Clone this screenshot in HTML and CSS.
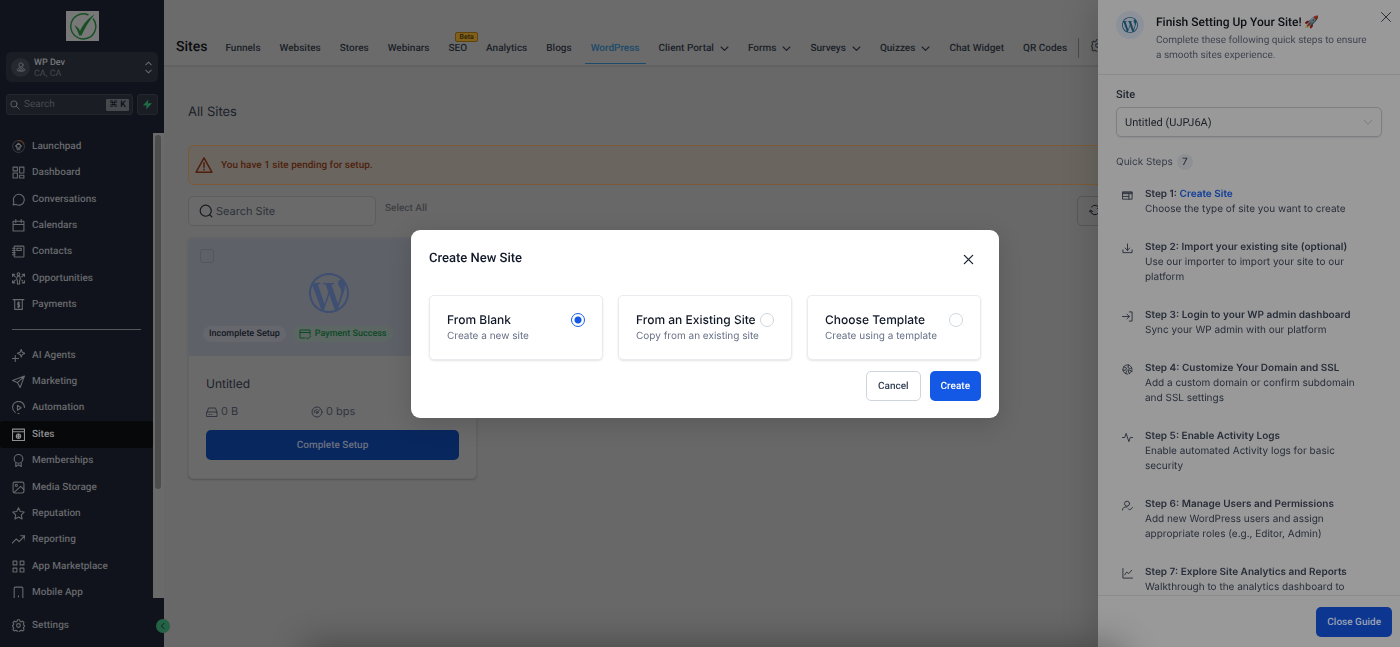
FILE: index.html
```html
<!DOCTYPE html>
<html lang="en">
<head>
    <meta charset="UTF-8">
    <meta name="viewport" content="width=device-width, initial-scale=1.0">
    <title>Sites - WordPress</title>
    <link rel="stylesheet" href="styles.css">
</head>
<body>
    <svg class="sprite" aria-hidden="true">
        <symbol id="wp" viewBox="0 0 24 24"><path d="M21.469 6.825c.84 1.537 1.318 3.3 1.318 5.175 0 3.979-2.156 7.456-5.363 9.325l3.295-9.527c.615-1.54.82-2.771.82-3.864 0-.405-.026-.78-.07-1.11m-7.981.105c.647-.03 1.232-.105 1.232-.105.582-.075.514-.93-.067-.899 0 0-1.755.135-2.88.135-1.064 0-2.85-.15-2.85-.15-.585-.03-.661.855-.075.885 0 0 .54.061 1.125.09l1.68 4.605-2.37 7.08L5.354 6.9c.649-.03 1.234-.1 1.234-.1.585-.075.516-.93-.065-.896 0 0-1.746.138-2.874.138-.2 0-.438-.008-.69-.015C4.911 3.15 8.235 1.215 12 1.215c2.809 0 5.365 1.072 7.286 2.833-.046-.003-.091-.009-.141-.009-1.06 0-1.812.923-1.812 1.914 0 .89.513 1.643 1.06 2.531.411.72.89 1.643.89 2.977 0 .915-.354 1.994-.821 3.479l-1.075 3.585-3.9-11.61.001.014zM12 22.784c-1.059 0-2.081-.153-3.048-.437l3.237-9.406 3.315 9.087c.024.053.05.101.078.149-1.12.393-2.325.609-3.582.609M1.211 12c0-1.564.336-3.05.935-4.39L7.29 21.709C3.694 19.96 1.212 16.271 1.211 12M12 0C5.385 0 0 5.385 0 12s5.385 12 12 12 12-5.385 12-12S18.615 0 12 0"/></symbol>
        <symbol id="down" viewBox="0 0 24 24"><path d="M3 8l9 9 9-9"/></symbol>
        <symbol id="close" viewBox="0 0 24 24"><path d="M3 3l18 18M21 3L3 21"/></symbol>
        <symbol id="gear" viewBox="0 0 24 24"><circle cx="12" cy="12" r="3.5"/><path d="M10 1.5h4l.7 3 2.2.9 2.6-1.6 2.8 2.8-1.6 2.6.9 2.1 2.900.7v2l-2.900.7-.9 2.100 1.600 2.600-2.800 2.800-2.600-1.600-2.200.9-.7 3h-4l-.7-3-2.200-.9-2.600 1.600-2.800-2.800 1.600-2.600-.9-2.100-2.500-.7v-2l2.500-.7.9-2.100-1.600-2.600 2.800-2.800 2.600 1.600 2.200-.9z"/></symbol>
        <symbol id="search" viewBox="0 0 24 24"><circle cx="9.500" cy="9.500" r="7.500"/><path d="M15 15l7 7"/></symbol>
        <symbol id="search-round" viewBox="0 0 24 24"><circle cx="11.500" cy="11.500" r="9.500"/><path d="M18.500 18.500L22 22"/></symbol>
    </svg>

    <div class="app">
        <aside class="sidebar">
            <div class="brand">
                <svg viewBox="0 0 33 30" width="33" height="30">
                    <rect width="33" height="30" fill="#787878"/>
                    <path d="M27 7.500A12.500 12.500 0 1 1 22.500 4" fill="none" stroke="#154f22" stroke-width="1.400"/>
                    <path d="M8.500 14.500c2 .5 4.500 2.700 5.500 5.500C17 13.500 22 7 28.500 3.500 23 10 18.500 17.500 15.500 24.500h-2.300C12 20 10 17 8.500 14.500z" fill="#154f22"/>
                </svg>
            </div>
            <button class="account" type="button">
                <span class="avatar"><svg class="ico" viewBox="0 0 24 24"><circle cx="12" cy="7" r="5"/><path d="M9 12l-6 6c-1 4 3 4 9 4s10 0 9-4l-6-6M7 19l5-5 5 5z"/></svg></span>
                <span class="account-name"><strong>WP Dev</strong><span>CA, CA</span></span>
                <svg class="ico" viewBox="0 0 24 24"><path d="M7 7l5-5 5 5M7 17l5 5 5-5"/></svg>
            </button>
            <div class="quick">
                <label class="quick-search">
                    <svg class="ico"><use href="#search"/></svg>
                    <input type="text" placeholder="Search" aria-label="Search">
                    <kbd>⌘ K</kbd>
                </label>
                <button class="bolt" type="button" aria-label="Quick actions"><svg viewBox="0 0 24 24" width="11" height="11"><path d="M14 1L2 14h8l-1 9 13-14h-9z" fill="#1f6b46"/></svg></button>
            </div>
            <div class="menu-wrap">
                <nav class="menu">
                    <ul class="menu-top">
                        <li><a href="#"><svg class="ico" viewBox="0 0 24 24"><circle cx="12" cy="12" r="11" stroke="#33363c"/><path d="M12 1a11 11 0 0 1 10 6.500" stroke="#6b3a20"/><path d="M12 6l-5.500 5.500H9V15h6v-3.500h2.500zM9.500 18h5"/></svg>Launchpad</a></li>
                        <li><a href="#"><svg class="ico" viewBox="0 0 24 24"><path d="M2 2h8v7H2zM14 2h8v11h-8zM2 13h8v9H2zM14 17h8v5h-8z"/></svg>Dashboard</a></li>
                        <li><a href="#"><svg class="ico" viewBox="0 0 24 24"><path d="M2 22l1.500-5.500A10 10 0 1 1 7.500 21z"/></svg>Conversations</a></li>
                        <li><a href="#"><svg class="ico" viewBox="0 0 24 24"><path d="M2 4h20v18H2zM2 10h20M7 1v6M17 1v6"/></svg>Calendars</a></li>
                        <li><a href="#"><svg class="ico" viewBox="0 0 24 24"><rect x="4" y="2" width="18" height="20" rx="1"/><path d="M9 6h8v4H9zM1 6h5M1 10h5M1 14h5M1 18h5"/></svg>Contacts</a></li>
                        <li><a href="#"><svg class="ico" viewBox="0 0 24 24"><circle cx="12" cy="4" r="2.500"/><path d="M12 7c-4 2-4 6-2 9v6h4v-6c2-3 2-7-2-9zM1 4l5 5M1 8V4h4M23 4l-5 5M23 8V4h-4M1 20l5-5M1 16v4h4M23 20l-5-5M23 16v4h-4"/></svg>Opportunities</a></li>
                        <li><a href="#"><svg class="ico" viewBox="0 0 24 24"><path d="M2 3h20M5 3v18h14V3M14.500 9h-4v3.500h3.500V16h-4M12 7v11"/></svg>Payments</a></li>
                    </ul>
                    <ul class="menu-bottom">
                        <li><a href="#"><svg class="ico" viewBox="0 0 24 24"><path d="M17 1l2 5 5 2-5 2-2 5-2-5-5-2 5-2zM6 12v11M0 17.500h12"/></svg>AI Agents</a></li>
                        <li><a href="#"><svg class="ico" viewBox="0 0 24 24"><path d="M23 2L1 10l9 4 5 9zM23 2L10 14"/></svg>Marketing</a></li>
                        <li><a href="#"><svg class="ico" viewBox="0 0 24 24"><path d="M6 21A11 11 0 1 1 23 12M10 8v9l7-4.500zM11 23h2"/></svg>Automation</a></li>
                        <li class="active"><a href="#"><svg class="ico" viewBox="0 0 24 24"><path d="M1 2h22v21H1zM1 7h22"/><circle cx="12" cy="15" r="4"/><path d="M12 11v8M8 15h8"/></svg>Sites</a></li>
                        <li><a href="#"><svg class="ico" viewBox="0 0 24 24"><circle cx="12" cy="9" r="8"/><path d="M7 16v7l5-3 5 3v-7"/></svg>Memberships</a></li>
                        <li><a href="#"><svg class="ico" viewBox="0 0 24 24"><rect x="2" y="2" width="20" height="20" rx="3"/><circle cx="8" cy="8" r="2"/><path d="M4 21L16 10l6 6"/></svg>Media Storage</a></li>
                        <li><a href="#"><svg class="ico" viewBox="0 0 24 24"><path d="M12 1.500l3.200 6.800 7.300 1-5.300 5.200 1.300 7.500L12 18.500 5.500 22l1.300-7.500L1.500 9.300l7.300-1z"/></svg>Reputation</a></li>
                        <li><a href="#"><svg class="ico" viewBox="0 0 24 24"><path d="M0 19l8-8 5 5L23 6M16 5h8v8"/></svg>Reporting</a></li>
                        <li><a href="#"><svg class="ico" viewBox="0 0 24 24"><path d="M2 2h7v7H2zM15 2h7v7h-7zM2 15h7v7H2zM15 15h7v7h-7z"/></svg>App Marketplace</a></li>
                        <li><a href="#"><svg class="ico" viewBox="0 0 24 24"><rect x="4" y="2" width="16" height="24" rx="2"/><path d="M12 18v2"/></svg>Mobile App</a></li>
                    </ul>
                </nav>
                <div class="track"><div class="thumb"></div></div>
            </div>
            <a class="settings" href="#"><svg class="ico"><use href="#gear"/></svg>Settings</a>
            <button class="collapse" type="button" aria-label="Collapse sidebar"><svg class="ico" viewBox="0 0 24 24"><path d="M15 4l-8 8 8 8"/></svg></button>
        </aside>

        <main class="main">
            <header class="topbar">
                <h1>Sites</h1>
                <nav class="tabs">
                    <a href="#">Funnels</a>
                    <a href="#">Websites</a>
                    <a href="#">Stores</a>
                    <a href="#">Webinars</a>
                    <a href="#">SEO<span class="beta">Beta</span></a>
                    <a href="#">Analytics</a>
                    <a href="#">Blogs</a>
                    <a href="#" class="current">WordPress</a>
                    <a href="#">Client Portal<svg class="ico"><use href="#down"/></svg></a>
                    <a href="#">Forms<svg class="ico"><use href="#down"/></svg></a>
                    <a href="#">Surveys<svg class="ico"><use href="#down"/></svg></a>
                    <a href="#">Quizzes<svg class="ico"><use href="#down"/></svg></a>
                    <a href="#">Chat Widget</a>
                    <a href="#">QR Codes</a>
                </nav>
                <button class="top-settings" type="button" aria-label="Site settings"><svg class="ico"><use href="#gear"/></svg></button>
            </header>

            <section class="content">
                <h2>All Sites</h2>
                <div class="alert">
                    <svg class="ico" viewBox="0 0 24 24"><path d="M12 2.500L1.500 21.500h21zM12 9v6M12 17.500v1"/></svg>
                    You have 1 site pending for setup.
                </div>
                <div class="tools">
                    <label class="site-search">
                        <svg class="ico"><use href="#search-round"/></svg>
                        <input type="text" placeholder="Search Site" aria-label="Search Site">
                    </label>
                    <button class="select-all" type="button">Select All</button>
                    <button class="refresh" type="button" aria-label="Refresh"><svg class="ico" viewBox="0 0 24 24"><path d="M3 14a9 9 0 0 0 16 4M21 10A9 9 0 0 0 5 6M1 16l2-4 4 3M23 8l-2 4-4-3"/></svg></button>
                </div>

                <article class="site-card">
                    <div class="site-preview">
                        <input type="checkbox" aria-label="Select Untitled">
                        <svg class="site-logo"><use href="#wp"/></svg>
                        <div class="pills">
                            <span class="pill">Incomplete Setup</span>
                            <span class="pill paid"><svg class="ico" viewBox="0 0 24 24"><path d="M11 20H2V4h20v10M2 9h20M14 19l3 3 6-5"/></svg>Payment Success</span>
                        </div>
                    </div>
                    <div class="site-info">
                        <h3>Untitled</h3>
                        <div class="stats">
                            <span><svg class="ico" viewBox="0 0 24 24"><path d="M2 13l3-9h14l3 9M2 12h20v9H2zM6 17h1M10 17h1"/></svg>0 B</span>
                            <span><svg class="ico" viewBox="0 0 24 24"><circle cx="12" cy="12" r="10"/><circle cx="12" cy="13" r="2"/><path d="M13.500 11.500L18 7M6 13a6 6 0 0 1 6-6"/></svg>0 bps</span>
                        </div>
                        <button class="btn complete" type="button">Complete Setup</button>
                    </div>
                </article>
            </section>
        </main>
    </div>

    <aside class="drawer">
        <header class="drawer-head">
            <span class="wp-badge"><svg><use href="#wp"/></svg></span>
            <div>
                <h2>Finish Setting Up Your Site! <span class="rocket">🚀</span></h2>
                <p>Complete these following quick steps to ensure a smooth sites experience.</p>
            </div>
            <button class="drawer-close" type="button" aria-label="Close guide"><svg class="ico"><use href="#close"/></svg></button>
        </header>
        <div class="drawer-body">
            <label class="field-label" for="site">Site</label>
            <div class="select-box">
                <select id="site"><option>Untitled (UJPJ6A)</option></select>
                <svg class="ico"><use href="#down"/></svg>
            </div>
            <p class="steps-title">Quick Steps <span class="count">7</span></p>
            <ol class="steps">
                <li>
                    <svg class="ico" viewBox="0 0 24 24"><path d="M2 4h20v16H2zM2 8h20M2 6h20M15 8v12M2 14h13"/></svg>
                    <div><h4>Step 1: <a href="#">Create Site</a></h4><p>Choose the type of site you want to create</p></div>
                </li>
                <li>
                    <svg class="ico" viewBox="0 0 24 24"><path d="M2 15v6h20v-6M12 2v14M7 11l5 5 5-5"/></svg>
                    <div><h4>Step 2: Import your existing site (optional)</h4><p>Use our importer to import your site to our platform</p></div>
                </li>
                <li>
                    <svg class="ico" viewBox="0 0 24 24"><path d="M1 12h15M11 7l5 5-5 5M16 2h6v20h-6"/></svg>
                    <div><h4>Step 3: Login to your WP admin dashboard</h4><p>Sync your WP admin with our platform</p></div>
                </li>
                <li>
                    <svg class="ico" viewBox="0 0 24 24"><path d="M12 22A10 10 0 1 1 22 12M4 6l6 3-3 5-5-1M14 2l-1 6 5 2 3-2M8 21l2-6M13 13l3 9 2-4 4-2z"/></svg>
                    <div><h4>Step 4: Customize Your Domain and SSL</h4><p>Add a custom domain or confirm subdomain and SSL settings</p></div>
                </li>
                <li>
                    <svg class="ico" viewBox="0 0 24 24"><path d="M1 12h5l3-9 6 18 3-9h5"/></svg>
                    <div><h4>Step 5: Enable Activity Logs</h4><p>Enable automated Activity logs for basic security</p></div>
                </li>
                <li>
                    <svg class="ico" viewBox="0 0 24 24"><circle cx="11" cy="8" r="5.500"/><path d="M1 22c0-5 3-7 10-7M14 19l3 3 6-6"/></svg>
                    <div><h4>Step 6: Manage Users and Permissions</h4><p>Add new WordPress users and assign appropriate roles (e.g., Editor, Admin)</p></div>
                </li>
                <li>
                    <svg class="ico" viewBox="0 0 24 24"><path d="M2 1v21h21M6 15l4-6 5 3 6-7"/></svg>
                    <div><h4>Step 7: Explore Site Analytics and Reports</h4><p>Walkthrough to the analytics dashboard to</p></div>
                </li>
            </ol>
        </div>
        <footer class="drawer-foot"><button class="btn guide" type="button">Close Guide</button></footer>
    </aside>

    <div class="overlay">
        <form class="modal" role="dialog" aria-labelledby="modal-title">
            <header class="modal-head">
                <h2 id="modal-title">Create New Site</h2>
                <button type="button" aria-label="Close"><svg class="ico"><use href="#close"/></svg></button>
            </header>
            <div class="options">
                <label class="option">
                    <span class="option-name">From Blank</span>
                    <input type="radio" name="source" checked>
                    <span class="option-desc">Create a new site</span>
                </label>
                <label class="option">
                    <span class="option-name">From an Existing Site</span>
                    <input type="radio" name="source">
                    <span class="option-desc">Copy from an existing site</span>
                </label>
                <label class="option">
                    <span class="option-name">Choose Template</span>
                    <input type="radio" name="source">
                    <span class="option-desc">Create using a template</span>
                </label>
            </div>
            <footer class="modal-foot">
                <button class="btn cancel" type="button">Cancel</button>
                <button class="btn create" type="button">Create</button>
            </footer>
        </form>
    </div>
</body>
</html>
```

FILE: styles.css
```css
* {
    box-sizing: border-box;
}
body {
    margin: 0;
    font-family: Inter, sans-serif;
    font-size: 10px;
    line-height: 15px;
    background: #686868;
    color: #14181f;
    overflow: hidden;
    text-rendering: geometricPrecision;
}
h1, h2, h3, h4, p, ul, ol {
    margin: 0;
    padding: 0;
    font-weight: 500;
}
ul, ol {
    list-style: none;
}
a {
    color: inherit;
    text-decoration: none;
}
button, input, select {
    font: inherit;
    color: inherit;
    text-rendering: inherit;
    margin: 0;
    padding: 0;
    border: 0;
    background: none;
    outline: none;
}
.sprite {
    position: absolute;
    width: 0;
    height: 0;
}
.ico {
    width: 13px;
    height: 13px;
    flex: none;
    fill: none;
    stroke: currentColor;
    stroke-width: 2;
    stroke-linecap: round;
    stroke-linejoin: round;
}
.app {
    display: flex;
    height: 100vh;
}

/* Sidebar */
.sidebar {
    position: relative;
    flex: none;
    width: 164px;
    display: flex;
    flex-direction: column;
    background: #10131b;
    color: #67696d;
    font-family: Roboto, sans-serif;
    font-weight: 500;
}
.brand {
    display: flex;
    justify-content: center;
    padding: 11px 0;
}
.account {
    display: flex;
    align-items: center;
    gap: 4px;
    height: 30px;
    margin: 0 6px 12px;
    padding: 0 3px 0 5px;
    border-radius: 5px;
    background: #1a1d24;
    text-align: left;
}
.avatar {
    display: flex;
    align-items: center;
    justify-content: center;
    width: 19px;
    height: 19px;
    border-radius: 50%;
    background: #26292f;
}
.avatar .ico {
    width: 10px;
    height: 10px;
}
.account-name {
    flex: 1;
    padding-top: 3px;
    font-size: 9px;
    line-height: 11px;
    font-weight: 400;
    color: #46484d;
}
.account-name strong {
    display: block;
    font-weight: 500;
    color: #77797c;
}
.quick {
    display: flex;
    gap: 4px;
    margin: 0 6px;
}
.quick-search, .bolt {
    display: flex;
    align-items: center;
    height: 21px;
    border: 1px solid #23262c;
    border-radius: 3px;
    background: #1a1d23;
}
.quick-search {
    flex: 1;
    min-width: 0;
    gap: 4px;
    padding: 0 3px;
}
.quick-search .ico {
    width: 10px;
    height: 10px;
}
.quick-search input {
    flex: 1;
    min-width: 0;
    font-weight: 400;
}
.quick-search input::placeholder {
    color: #494b50;
    opacity: 1;
}
kbd {
    flex: none;
    padding: 0 3px;
    border-radius: 1px;
    background: #46494e;
    color: #0b0d12;
    font: 500 9px/12px Roboto, "DejaVu Sans", sans-serif;
}
.bolt {
    flex: none;
    justify-content: center;
    width: 21px;
}
.menu-wrap {
    flex: 1;
    min-height: 0;
    display: flex;
    margin-top: 18px;
}
.menu {
    flex: 1;
    overflow: hidden;
    line-height: 11px;
}
.menu ul {
    display: grid;
    grid-auto-rows: 1fr;
}
.menu-top {
    height: 185px;
}
.menu-bottom {
    height: 264px;
    position: relative;
    margin-top: 24px;
}
.menu-bottom::before {
    content: "";
    position: absolute;
    top: -13px;
    left: 12px;
    right: 12px;
    height: 1px;
    background: #55575a;
}
.menu a, .settings {
    display: flex;
    align-items: center;
    gap: 7px;
    height: 100%;
    padding-left: 12px;
}
.menu .active {
    background: #07080a;
    color: #8f9092;
    border-radius: 3px;
}
.track {
    width: 11px;
    padding: 2px 3px 0 2px;
    background: #6a6a6a;
}
.thumb {
    width: 6px;
    height: 354px;
    border-radius: 3px;
    background: #4d4d4d;
}
.settings {
    flex: none;
    height: 49px;
    padding-top: 5px;
}
.collapse {
    position: absolute;
    right: -6px;
    bottom: 14px;
    width: 14px;
    height: 14px;
    display: flex;
    align-items: center;
    justify-content: center;
    border-radius: 50%;
    background: #246246;
    color: #0d2018;
}
.collapse .ico {
    width: 8px;
    height: 8px;
    stroke-width: 3;
}

/* Main area */
.main {
    flex: 1;
    min-width: 0;
    overflow: hidden;
}
.topbar {
    display: flex;
    align-items: flex-end;
    height: 67px;
    padding: 0 12px;
    background: #6b6b6b;
    border-bottom: 2px solid #616161;
    font-family: Roboto, sans-serif;
}
.topbar h1 {
    font-size: 14px;
    line-height: 18px;
    margin-bottom: 9px;
    color: #0a0c10;
}
.tabs {
    display: flex;
    gap: 7px;
    margin: 0 5px 1px 12px;
    color: #1a1f28;
    font-weight: 500;
    white-space: nowrap;
}
.tabs a {
    position: relative;
    display: flex;
    align-items: center;
    gap: 6px;
    height: 32px;
    padding: 2px 6px 0;
    border-bottom: 1px solid transparent;
}
.tabs .current {
    color: #1b4a6a;
    border-color: #1b4a6a;
}
.tabs .ico {
    width: 9px;
    height: 9px;
    stroke-width: 3;
}
.beta {
    position: absolute;
    top: 0;
    left: 13px;
    padding: 0 3px;
    border: 1px solid #5e430b;
    border-radius: 2px;
    background: #80601a;
    font-size: 7px;
    line-height: 8px;
    color: #2b1d08;
}
.top-settings {
    height: 20px;
    margin-bottom: 7px;
    padding-left: 12px;
    border-left: 1px solid #4b4b4b;
    color: #2a2e35;
}
.content {
    padding: 36px 24px;
}
.content h2 {
    font-size: 13px;
    line-height: 18px;
    font-weight: 400;
    color: #1a1f2a;
}
.alert {
    display: flex;
    align-items: center;
    gap: 8px;
    height: 40px;
    margin-top: 24px;
    padding: 0 6px;
    border: 1px solid #7d5a37;
    border-radius: 5px;
    background: #6a665f;
    color: #4f1e0d;
    font-family: Roboto, sans-serif;
    font-weight: 500;
}
.alert .ico {
    width: 18px;
    height: 18px;
}
.tools {
    display: flex;
    align-items: center;
    margin: 11px 0;
}
.site-search {
    display: flex;
    align-items: center;
    gap: 3px;
    width: 188px;
    height: 30px;
    padding: 0 10px;
    border: 1px solid #5c5d5f;
    border-radius: 5px;
    background: #6a6a6a;
    font-size: 11px;
}
.site-search .ico {
    width: 14px;
    height: 14px;
}
.site-search input {
    flex: 1;
    min-width: 0;
}
.site-search input::placeholder {
    color: #2c313a;
    opacity: 1;
}
.select-all {
    margin: 0 auto 5px 9px;
    font-family: Roboto, sans-serif;
    font-weight: 500;
    color: #3d3f43;
}
.refresh {
    width: 44px;
    height: 30px;
    margin-right: 255px;
    padding: 2px 0 0 11px;
    text-align: left;
    border: 1px solid #585858;
    border-radius: 5px;
}
.refresh .ico {
    width: 12px;
    height: 12px;
}
.site-card {
    width: 289px;
    border: 1px solid #636466;
    border-radius: 5px;
    background: #6a6a6a;
    box-shadow: 0 1px 2px rgba(0, 0, 0, 0.2);
    overflow: hidden;
}
.site-preview {
    display: flex;
    flex-direction: column;
    height: 118px;
    padding: 11px;
    background: #5f6169;
}
.site-preview input, .option input {
    appearance: none;
}
.site-preview input {
    width: 14px;
    height: 14px;
    border: 1px solid #54565c;
    border-radius: 3px;
}
.site-logo {
    width: 40px;
    height: 40px;
    margin: 10px 0 13px 109px;
    fill: #3e4f71;
}
.pills {
    display: flex;
    gap: 7px;
    padding-left: 3px;
    font-family: Roboto, sans-serif;
    font-weight: 500;
    font-size: 9px;
    line-height: 16px;
    white-space: nowrap;
}
.pill {
    display: flex;
    align-items: center;
    gap: 4px;
    padding: 0 6px;
    border-radius: 8px;
    background: #65676d;
    color: #14181f;
}
.paid {
    background: #5c6663;
    color: #0c4a26;
}
.paid .ico {
    width: 12px;
    height: 12px;
}
.site-info {
    padding: 19px 17px 18px;
}
.site-info h3 {
    font-size: 12px;
    line-height: 18px;
    font-weight: 400;
    color: #1c212b;
}
.stats {
    display: flex;
    margin: 11px 0;
    color: #30353f;
    font-size: 11px;
}
.stats span {
    display: flex;
    align-items: center;
    gap: 3px;
    width: 105px;
}
.stats .ico {
    width: 12px;
    height: 12px;
}
.btn {
    height: 30px;
    padding: 0 11px;
    border-radius: 5px;
    font-family: Roboto, sans-serif;
    font-weight: 500;
}
.complete {
    width: 100%;
    background: #09275f;
    color: #6b7180;
}

/* Setup guide */
.drawer {
    position: fixed;
    top: 0;
    right: 0;
    bottom: 0;
    width: 302px;
    display: flex;
    flex-direction: column;
    background: #999;
    box-shadow: -6px 0 30px rgba(0, 0, 0, 0.15);
}
.drawer-head {
    display: flex;
    align-items: flex-start;
    gap: 8px;
    height: 75px;
    padding: 11px 8px 0 18px;
    border-bottom: 1px solid #8c8c8d;
    font-family: Roboto, sans-serif;
}
.drawer-head > div {
    flex: 1;
}
.wp-badge {
    display: flex;
    align-items: center;
    justify-content: center;
    width: 28px;
    height: 28px;
    margin-right: 4px;
    border-radius: 50%;
    background: #8d9199;
}
.wp-badge svg {
    width: 16px;
    height: 16px;
    fill: #1b4861;
}
.drawer-head h2 {
    font-size: 12px;
    line-height: 22px;
    color: #0c0f14;
}
.rocket {
    filter: brightness(0.6);
}
.drawer-head p {
    padding-right: 2px;
    font-weight: 400;
    color: #3e4450;
}
.drawer-close {
    height: 13px;
    color: #2a2e35;
}
.drawer-close .ico {
    width: 12px;
    height: 12px;
}
.drawer-body {
    flex: 1;
    min-height: 0;
    overflow: hidden;
    padding: 12px 18px 0;
}
.field-label {
    display: block;
    color: #20262f;
    font-family: Roboto, sans-serif;
    font-size: 11px;
    font-weight: 500;
}
.select-box {
    display: flex;
    align-items: center;
    height: 30px;
    margin: 5px 0 17px;
    padding-right: 8px;
    border: 1px solid #7d7f83;
    border-radius: 5px;
    box-shadow: 0 1px 1px rgba(0, 0, 0, 0.08);
}
.select-box select {
    appearance: none;
    flex: 1;
    height: 100%;
    padding-left: 8px;
    font-family: Roboto, sans-serif;
    font-size: 11px;
    color: #1c2028;
}
.select-box .ico {
    width: 10px;
    height: 10px;
    color: #74777c;
}
.steps-title {
    display: flex;
    align-items: center;
    gap: 4px;
    font-weight: 400;
    color: #343b47;
}
.count {
    width: 16px;
    border-radius: 8px;
    background: #8e9094;
    line-height: 16px;
    text-align: center;
    color: #20262f;
}
.steps {
    display: grid;
    gap: 23px;
    margin-top: 17px;
    color: #272e3a;
}
.steps li {
    display: flex;
    gap: 12px;
    padding: 0 18px 0 6px;
}
.steps .ico {
    width: 11px;
    height: 11px;
    margin-top: 3px;
}
.steps h4 {
    font-weight: 600;
}
.steps a {
    color: #0e3c9a;
}
.steps p {
    font-weight: 400;
}
.drawer-foot {
    display: flex;
    justify-content: flex-end;
    padding: 11px 8px 10px;
    border-top: 1px solid #8c8c8d;
}
.guide {
    background: #0c3690;
    color: #9aa3b5;
}

/* Create site dialog */
.overlay {
    position: fixed;
    inset: 0;
    display: flex;
    align-items: center;
    justify-content: center;
    padding: 1px 0 0 10px;
}
.overlay::after {
    content: "";
    position: absolute;
    top: 100%;
    left: 22%;
    right: 20%;
    height: 40px;
    box-shadow: 0 0 34px 4px rgba(0, 0, 0, 0.3);
}
.modal {
    width: 588px;
    padding: 18px 18px 17px;
    border-radius: 9px;
    background: #fff;
    box-shadow: 0 6px 24px rgba(0, 0, 0, 0.15);
}
.modal-head {
    display: flex;
    justify-content: space-between;
    height: 47px;
    padding-right: 7px;
}
.modal-head h2 {
    font: 500 13px/22px Roboto, sans-serif;
    color: #101828;
}
.modal-head button {
    height: 28px;
}
.modal-head .ico {
    width: 11px;
    height: 11px;
    stroke-width: 3;
    color: #1d2939;
}
.options {
    display: grid;
    grid-template-columns: repeat(3, minmax(0, 1fr));
    gap: 15px;
}
.option {
    display: grid;
    grid-template-columns: 1fr auto;
    padding: 15px 17px;
    border: 1px solid #e9ebee;
    border-radius: 5px;
    box-shadow: 0 1px 2px rgba(16, 24, 40, 0.12);
    white-space: nowrap;
}
.option-name {
    font-size: 12px;
    line-height: 18px;
    font-weight: 500;
    color: #101828;
}
.option-desc {
    grid-column: 1 / -1;
    color: #667085;
}
.option input {
    width: 14px;
    height: 14px;
    align-self: center;
    border: 1px solid #d0d5dd;
    border-radius: 50%;
}
.option input:checked {
    border-color: #155eef;
    background: radial-gradient(circle, #1458e6 3px, transparent 4px);
}
.modal-foot {
    display: flex;
    justify-content: flex-end;
    gap: 9px;
    margin-top: 11px;
}
.cancel {
    border: 1px solid #d0d5dd;
    color: #344054;
}
.create {
    background: #1458e6;
    color: #fff;
}
```
